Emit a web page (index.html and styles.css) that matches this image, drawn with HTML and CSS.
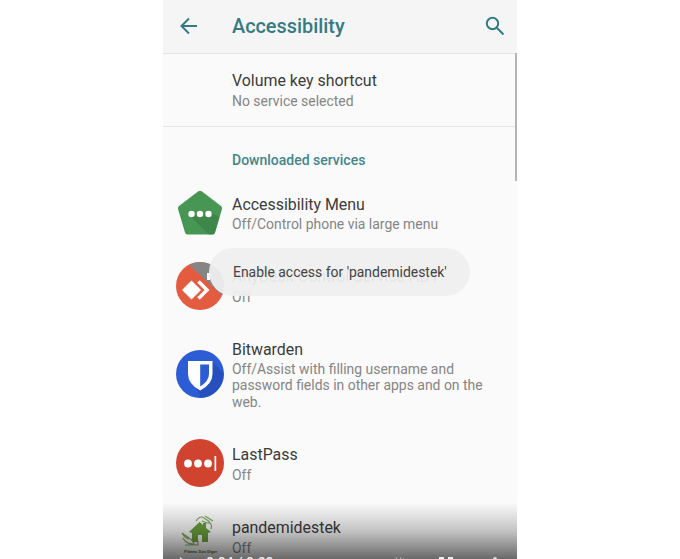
FILE: index.html
```html
<!DOCTYPE html>
<html lang="en">
<head>
<meta charset="utf-8">
<title>Accessibility</title>
<link rel="stylesheet" href="styles.css">
</head>
<body>
<main class="phone">
  <header class="bar">
    <svg class="back" viewBox="0 0 18 18"><path d="M17 9H2M9 1.500L1.500 9L9 16.500"/></svg>
    <h1>Accessibility</h1>
    <svg class="search" viewBox="0 0 20 20"><circle cx="7.500" cy="7.500" r="5.700"/><path d="M11.800 11.800L18.500 18.500"/></svg>
  </header>
  <section class="shortcut">
    <h2>Volume key shortcut</h2>
    <p>No service selected</p>
  </section>
  <section class="services">
    <h3>Downloaded services</h3>
    <ul>
      <li class="menu">
        <svg viewBox="0 0 48 48">
          <path d="M22 2.500Q24 1 26 2.500L45 17Q46.500 18.500 46 20L39 43.500Q38.500 45.500 36.500 45.500H11.500Q9.500 45.500 9 43.500L2 20Q1.500 18.500 3 17Z" fill="#489653"/>
          <path d="M14 27L33 45.500H36.500Q38.500 45.500 39 43.500L43.500 28L36 24Z" fill="#3c8048" opacity=".75"/>
          <g fill="#fff"><circle cx="15.500" cy="25" r="3.200"/><circle cx="24" cy="25" r="3.200"/><circle cx="32.500" cy="25" r="3.200"/></g>
        </svg>
        <div><h2>Accessibility Menu</h2><p>Off/Control phone via large menu</p></div>
      </li>
      <li class="anydesk">
        <svg viewBox="0 0 48 48">
          <circle cx="24" cy="24" r="24" fill="#e45c3f"/>
          <path d="M13 2.700A24 24 0 0 1 46 33.500Z" fill="#858585"/>
          <path d="M6 28L15.500 18.500L25 28L15.500 37.500Z" fill="#fff"/>
          <path d="M22.500 19.500L31 28L22.500 36.500" fill="none" stroke="#fff" stroke-width="3.500"/>
          <path d="M31 11h3v7h-3z" fill="#fff"/>
        </svg>
        <div><h2>AnyDesk Control Service AD1</h2><p>Off</p></div>
      </li>
      <li class="bitwarden">
        <svg viewBox="0 0 48 48">
          <circle cx="24" cy="24" r="24" fill="#2d5dd5"/>
          <path d="M36 12L47.500 23A24 24 0 0 1 25 48L20 37Z" fill="#244cb3" opacity=".7"/>
          <path d="M12 11H36.500V24Q36.500 34 24.200 40.500Q12 34 12 24Z" fill="#fff"/>
          <path d="M24.200 14.500H33V24Q33 31 24.200 36.500Z" fill="#2d5dd5"/>
        </svg>
        <div><h2>Bitwarden</h2><p>Off/Assist with filling username and<br>password fields in other apps and on the<br>web.</p></div>
      </li>
      <li class="lastpass">
        <svg viewBox="0 0 48 48">
          <circle cx="24" cy="24" r="24" fill="#d0442f"/>
          <g fill="#fff"><circle cx="12" cy="24.500" r="3.900"/><circle cx="22" cy="24.500" r="3.900"/><circle cx="32" cy="24.500" r="3.900"/><path d="M38.500 17h1.700v15h-1.700z"/></g>
        </svg>
        <div><h2>LastPass</h2><p>Off</p></div>
      </li>
      <li class="pandemi">
        <svg viewBox="0 0 48 48">
          <path d="M13 18L23.500 8L27 11V9H30V14L35 18L32 19V28H26V21H22V28H16V19Z" fill="#6da03d"/>
          <g fill="none" stroke="#7fa95a" stroke-width="1.200"><path d="M20 7Q24 1 28 4L34 8M26 7L31 9Q37 8 35 15M29 2L37 7"/><path d="M6 19Q9 25 15 25L19 31M7 24Q10 30 17 30M9 31H22V27M6 19L13 24"/></g>
        </svg>
        <span class="caption">Pilates Don Diger</span>
        <div><h2>pandemidestek</h2><p>Off</p></div>
      </li>
    </ul>
  </section>
  <div class="scrollbar"></div>
  <div class="toast">Enable access for 'pandemidestek'</div>
  <div class="shade"></div>
  <div class="player">
    <svg class="play" viewBox="0 0 14 16"><path d="M1 0L13 8L1 16Z"/></svg>
    <span>0:04 / 0:38</span>
    <svg class="sound" viewBox="0 0 14 14"><path d="M1 2l3 4M5 0l2 5M10 0l-2 5M13 1l-3 4"/></svg>
    <svg class="full" viewBox="0 0 14 14"><path d="M1 5V1H5M9 1H13V5"/></svg>
    <svg class="more" viewBox="0 0 4 16"><circle cx="2" cy="2" r="2"/></svg>
  </div>
</main>
</body>
</html>
```
FILE: styles.css
```css
* { box-sizing: border-box; margin: 0; padding: 0; }
body { background: #fff; font-family: Roboto, sans-serif; height: 559px; overflow: hidden; }
.phone { position: relative; width: 354px; height: 559px; margin-left: 163px; background: #fafafa; overflow: hidden; }
.bar { display: flex; align-items: center; height: 54px; padding: 0 12px 1px 17px; background: #f5f5f5; border-bottom: 1.500px solid #e4e4e4; color: #347b84; }
.bar svg { fill: none; stroke: #347b84; stroke-width: 2; }
.back { width: 18px; height: 18px; }
.bar h1 { flex: 1; margin: 1px 0 0 34px; font-size: 19.850px; font-weight: 500; line-height: 26px; }
.search { width: 20px; height: 20px; }
h2 { font-size: 15.920px; font-weight: 400; line-height: 20px; color: #3c3c3c; white-space: nowrap; }
p { font-size: 13.950px; line-height: 16.500px; color: #858585; white-space: nowrap; }
.shortcut { height: 73px; padding: 17px 0 0 69px; border-bottom: 1.500px solid #e4e4e4; }
.shortcut p { margin-top: 2px; }
h3 { padding: 24px 0 0 69px; font-size: 14px; line-height: 18px; font-weight: 500; color: #42868c; }
ul { list-style: none; padding-top: 20px; }
li { position: relative; display: flex; padding-left: 13px; }
li svg { flex: none; width: 48px; height: 48px; margin-right: 8px; }
li p { margin-top: 2px; }
.menu { height: 73px; }
.menu div { padding-top: 6px; }
.menu p { margin-top: 1px; }
.anydesk { height: 78px; }
.anydesk div { padding-top: 5px; }
.bitwarden { height: 99px; }
.bitwarden svg { margin-top: 10px; }
.bitwarden p { margin-top: 1px; line-height: 16.300px; }
.lastpass { height: 75px; }
.lastpass div { padding-top: 6px; }
.pandemi { height: 60px; }
.pandemi div { padding-top: 4px; }
.scrollbar { position: absolute; right: 0; top: 53px; width: 2px; height: 128px; background: #b4b4b4; }
.toast { position: absolute; left: 46px; top: 248px; width: 261px; height: 48px; border-radius: 24px; padding-left: 24px; background: rgba(239,239,239,.94); color: #444; font-size: 13.950px; line-height: 48px; white-space: nowrap; }
.caption { position: absolute; left: 21px; top: 35px; font-size: 4.300px; line-height: 6px; font-weight: 700; color: #5b783e; }
.shade { position: absolute; left: 0; right: 0; bottom: 0; height: 56px; background: linear-gradient(transparent, rgba(0,0,0,.22) 50%, rgba(0,0,0,.58)); }
.player { position: absolute; left: 16px; top: 557px; width: 338px; height: 16px; display: flex; align-items: flex-start; color: #eee; font-size: 14px; font-weight: 500; line-height: 14px; }
.player svg { flex: none; fill: #ddd; }
.play { width: 14px; height: 16px; margin-right: 13px; }
.player span { width: 185px; margin-top: -1px; white-space: nowrap; }
.player .sound { width: 14px; height: 14px; margin-right: 34px; fill: none; stroke: #aaa; }
.player .full { width: 14px; height: 14px; margin-right: 40px; fill: none; stroke: #eee; stroke-width: 2; }
.more { width: 4px; height: 16px; }
```
